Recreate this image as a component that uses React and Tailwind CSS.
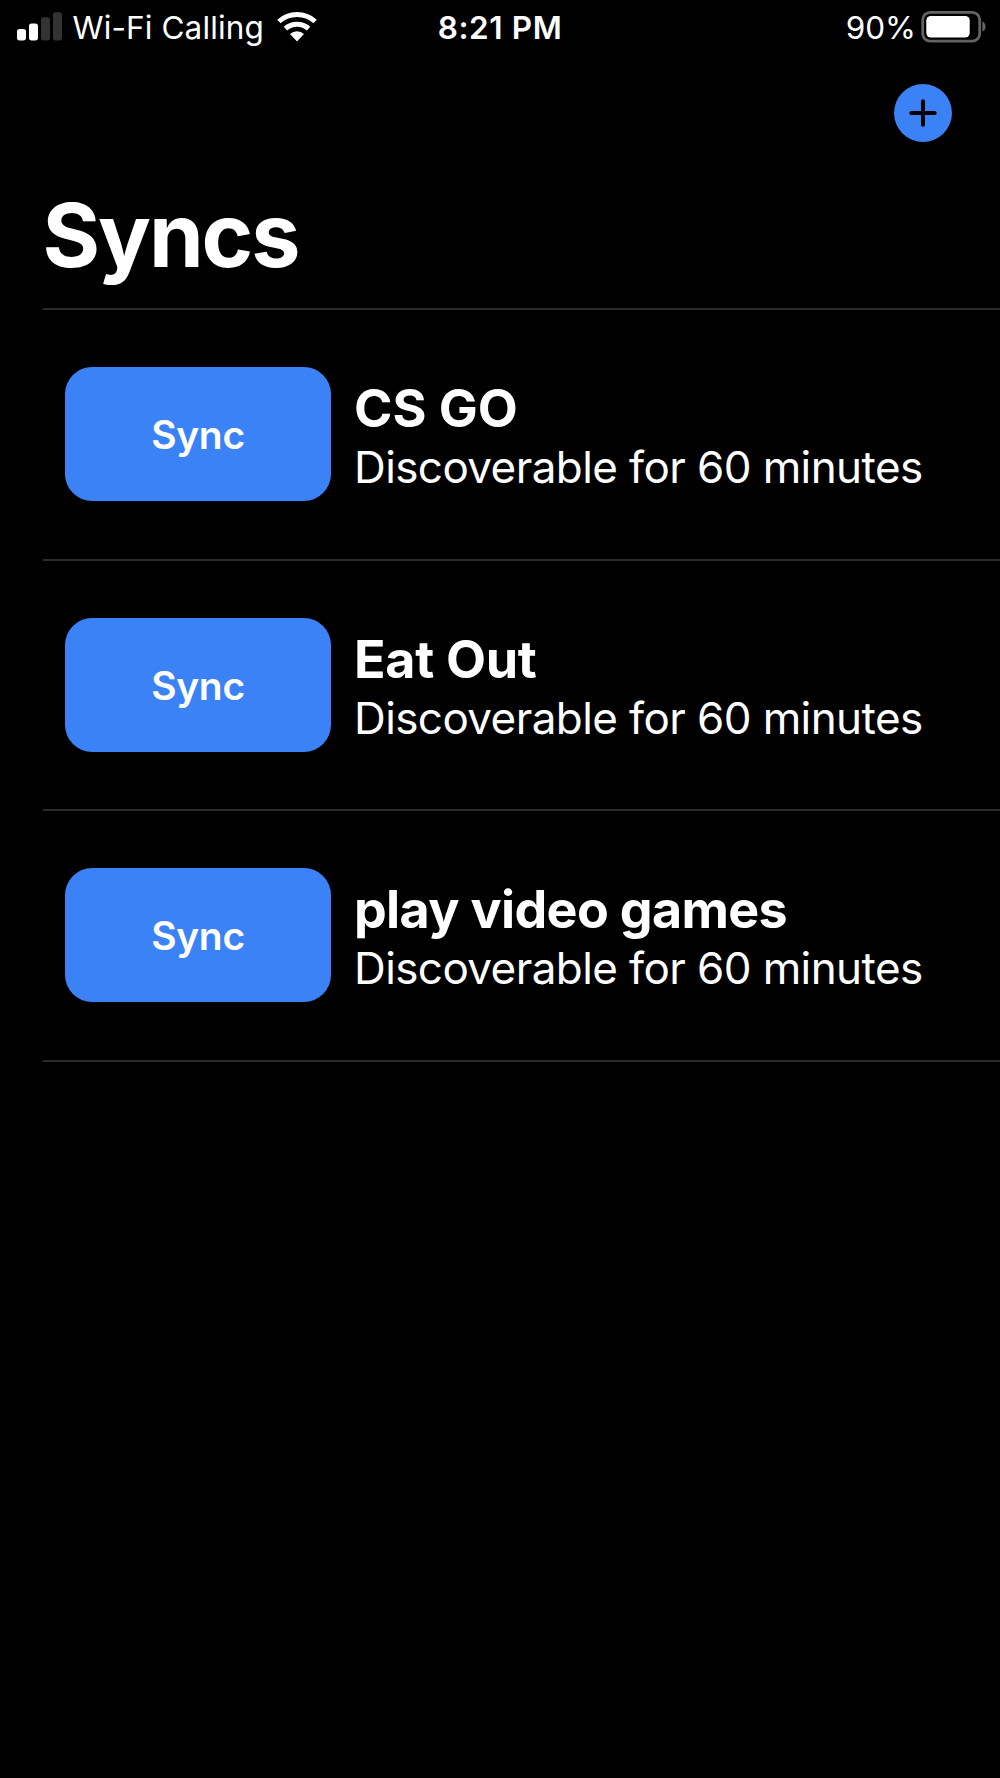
import React from 'react';

const syncs = [
  { title: 'CS GO', tracking: 'tracking-normal' },
  { title: 'Eat Out', tracking: 'tracking-[-0.3px]' },
  { title: 'play video games', tracking: 'tracking-[-0.66px]' },
];

function SignalIcon() {
  return (
    <svg className="h-[30px] w-[46px]" viewBox="0 0 46 30" aria-hidden="true">
      <rect x="0" y="17" width="9" height="11.4" rx="2.6" fill="#fff" />
      <rect x="12" y="11.5" width="9" height="16.9" rx="2.6" fill="#fff" />
      <rect x="24" y="5.2" width="9" height="23.2" rx="2.6" fill="#333" />
      <rect x="36" y="0.2" width="9" height="28.2" rx="2.6" fill="#333" />
    </svg>
  );
}

function WifiIcon() {
  return (
    <svg className="h-[30px] w-[40px]" viewBox="0 0 40 30" aria-hidden="true">
      <path d="M1.9 9.5 A27.1 27.1 0 0 1 38.1 9.5" fill="none" stroke="#fff" strokeWidth="5" />
      <path d="M8.4 16.7 A17.3 17.3 0 0 1 31.6 16.7" fill="none" stroke="#fff" strokeWidth="5" />
      <path d="M20 29.6 L13 21.9 A10.4 10.4 0 0 1 27 21.9 Z" fill="#fff" />
    </svg>
  );
}

function BatteryIcon() {
  return (
    <svg className="h-[32px] w-[65px]" viewBox="0 0 65 32" aria-hidden="true">
      <rect x="1.7" y="1.4" width="57" height="28.8" rx="7.5" fill="none" stroke="#636363" strokeWidth="2.8" />
      <rect x="5.3" y="4.9" width="43.4" height="21.7" rx="4.5" fill="#fff" />
      <path d="M61.3 10.4 C65.6 12 65.6 19.2 61.3 20.8 Z" fill="#636363" />
    </svg>
  );
}

function StatusBar() {
  return (
    <header className="grid h-[54px] grid-cols-3 items-center whitespace-nowrap pr-[14px] pl-[17px] text-[31.5px] leading-[38px]">
      <div className="flex items-center">
        <SignalIcon />
        <span className="ml-[9.5px] pt-[2px] tracking-[0.12px]">Wi-Fi Calling</span>
        <span className="ml-[13px]"><WifiIcon /></span>
      </div>
      <span className="pt-[2px] pr-[3px] text-center font-semibold tracking-[0.6px]">8:21 PM</span>
      <div className="flex items-center justify-end">
        <span className="mr-[5px] pt-[2px]">90%</span>
        <BatteryIcon />
      </div>
    </header>
  );
}

function SyncRow({ title, tracking }) {
  return (
    <li className="flex h-[250.5px] items-center border-b-2 border-[#2b2b2d] pl-[22px]">
      <button className="flex h-[134px] w-[266px] shrink-0 items-center justify-center rounded-[27px] bg-[#3b82f7] pt-[1px] text-[39px] leading-none font-semibold tracking-[-0.3px]">
        Sync
      </button>
      <div className="ml-[23px] pt-[6px] whitespace-nowrap">
        <h2 className={`text-[52px] leading-[60px] font-bold ${tracking}`}>{title}</h2>
        <p className="text-[44px] leading-[56px] tracking-[-0.59px]">Discoverable for 60 minutes</p>
      </div>
    </li>
  );
}

export default function App() {
  return (
    <main className="h-[1778px] w-[1000px] overflow-hidden bg-black font-['Inter',sans-serif] text-white">
      <StatusBar />
      <div className="flex h-[137px] justify-end pt-[29.5px] pr-[48px]">
        <button aria-label="Add sync" className="flex size-[58px] items-center justify-center rounded-full bg-[#3b82f7]">
          <svg className="size-[28px]" viewBox="0 0 28 28" aria-hidden="true">
            <path d="M14 2.3v23.4M2.3 14h23.4" stroke="#000" strokeWidth="4" strokeLinecap="round" />
          </svg>
        </button>
      </div>
      <h1 className="ml-[42.5px] text-[88px] leading-[88px] font-bold tracking-[-2.1px]">Syncs</h1>
      <ul className="mt-[29px] ml-[43px] border-t-2 border-[#2b2b2d]">
        {syncs.map((s) => (
          <SyncRow key={s.title} {...s} />
        ))}
      </ul>
    </main>
  );
}
